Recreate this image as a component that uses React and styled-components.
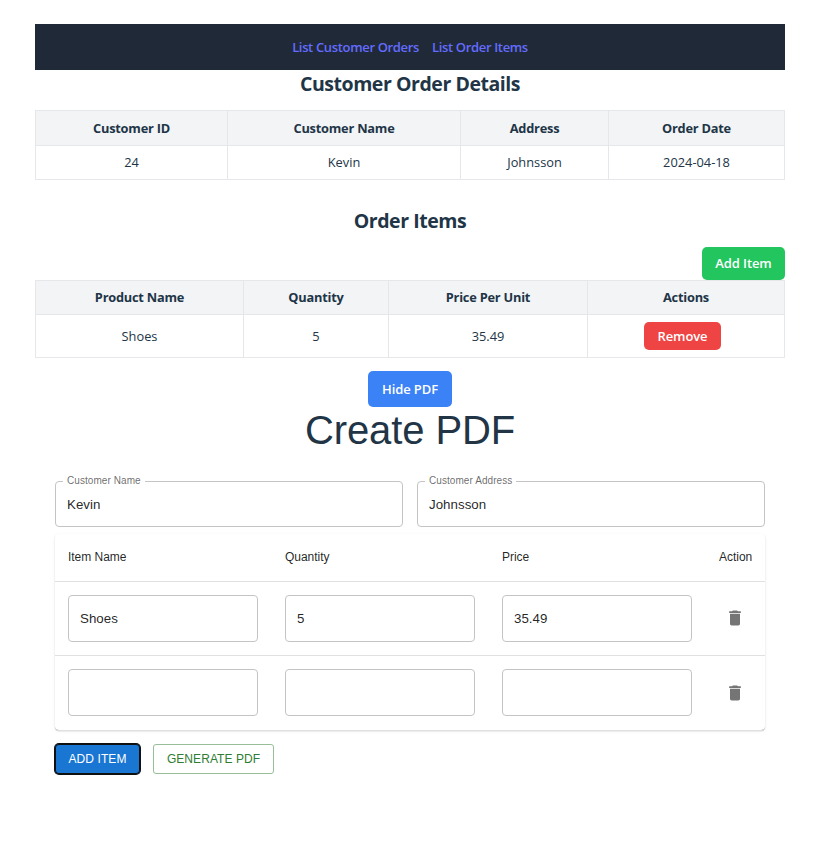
import React from "react";
import styled, { createGlobalStyle, css } from "styled-components";

const GlobalStyle = createGlobalStyle`
  *, *::before, *::after { box-sizing: border-box; }
  body {
    margin: 0;
    background: #fff;
    color: #213547;
    font-family: "Open Sans", "Noto Sans", sans-serif;
    font-size: 13px;
  }
  button, input { font: inherit; }
`;

const Page = styled.main`
  display: flex;
  flex-direction: column;
  width: 750px;
  margin: 0 0 0 35px;
  padding: 24px 0;
`;

const NavBar = styled.nav`
  display: flex;
  justify-content: center;
  align-items: center;
  gap: 13px;
  height: 46px;
  background: #1f2937;
`;

const NavLink = styled.a`
  color: #646cff;
  font-weight: 600;
  font-size: 13px;
  letter-spacing: -0.34px;
  line-height: 20px;
  text-decoration: none;
  white-space: nowrap;
`;

const SectionTitle = styled.h2`
  margin: ${(p) => p.$margin};
  font-size: 19.5px;
  font-weight: 700;
  letter-spacing: -0.45px;
  line-height: 28px;
  text-align: center;
`;

const DataTable = styled.table`
  width: 750px;
  table-layout: fixed;
  border-spacing: 0;
  border: solid #e5e7eb;
  border-width: 1px 0 0 1px;
`;

const Column = styled.col`
  width: ${(p) => p.$width}px;
`;

const cell = css`
  padding: 0;
  border: solid #e5e7eb;
  border-width: 0 1px 1px 0;
  text-align: center;
  vertical-align: middle;
  line-height: 20px;
`;

const HeadCell = styled.th`
  ${cell}
  height: ${(p) => p.$height}px;
  padding-bottom: ${(p) => (p.$height % 2 ? 0 : 1)}px;
  background: #f3f4f6;
  font-size: 12.8px;
  font-weight: 700;
  letter-spacing: -0.22px;
`;

const BodyCell = styled.td`
  ${cell}
  height: ${(p) => p.$height}px;
  padding-bottom: ${(p) => (p.$height % 2 ? 0 : 1)}px;
  font-size: 12.8px;
`;

const ActionRow = styled.div`
  display: flex;
  justify-content: ${(p) => p.$align};
  margin-top: ${(p) => p.$top}px;
`;

const SolidButton = styled.button`
  display: inline-flex;
  align-items: center;
  justify-content: center;
  vertical-align: middle;
  width: ${(p) => p.$width}px;
  height: ${(p) => p.$height}px;
  margin-right: ${(p) => p.$gutter || 0}px;
  padding: 0 0 ${(p) => (p.$height % 2 ? 1 : 0)}px;
  border: 0;
  border-radius: 5px;
  background: ${(p) => p.$color};
  color: #fff;
  font-weight: 600;
  font-size: 13px;
  letter-spacing: -0.1px;
  line-height: 20px;
`;

const PdfTitle = styled.h3`
  margin: 0;
  font: 400 40px/46px "Liberation Sans", Arial, sans-serif;
  letter-spacing: -0.1px;
  text-align: center;
`;

const PdfForm = styled.section`
  display: flex;
  flex-direction: column;
  width: 710px;
  margin: 23px 0 0 20px;
  color: rgba(0, 0, 0, 0.87);
  font-family: "Liberation Sans", Arial, sans-serif;
`;

const FieldRow = styled.div`
  display: grid;
  grid-template-columns: 348px 348px;
  gap: 14px;
`;

const Field = styled.fieldset`
  min-width: 0;
  height: 51px;
  margin: 0;
  padding: 0 7px;
  border: 1px solid #c4c4c4;
  border-radius: 4px;
`;

const FieldLabel = styled.legend`
  height: 11px;
  padding: 0 4px;
  color: rgba(0, 0, 0, 0.6);
  font-size: 10px;
  letter-spacing: 0.07px;
  line-height: 10px;
`;

const FieldInput = styled.input`
  display: block;
  width: 100%;
  height: 35px;
  padding: 0 4px;
  border: 0;
  outline: 0;
  background: transparent;
  color: inherit;
  font-size: 13.3px;
  letter-spacing: 0.03px;
`;

const Paper = styled.div`
  margin-top: 7px;
  height: 196px;
  border-radius: 4px;
  background: #fff;
  box-shadow: 0 1px 0 -0.5px rgba(0, 0, 0, 0.2), 0 2px 1px -1px rgba(0, 0, 0, 0.2),
    0 1px 1px rgba(0, 0, 0, 0.14), 0 1px 3px rgba(0, 0, 0, 0.1);
`;

const ItemRow = styled.div`
  display: grid;
  grid-template-columns: 190px 190px 190px 32px;
  column-gap: 27px;
  align-items: center;
  height: ${(p) => p.$height}px;
  padding: 0 13px ${(p) => p.$lift || 0}px;
  border-bottom: 1px solid #e0e0e0;
  font-size: 12px;

  &:last-child { border-radius: 0 0 4px 4px; }
`;

const ItemHeader = styled.span`
  line-height: 20px;
  letter-spacing: -0.03px;
  white-space: nowrap;
`;

const CellInput = styled.input`
  width: 190px;
  height: 47px;
  padding: 0 11px;
  border: 1px solid #c4c4c4;
  border-radius: 4px;
  outline: 0;
  background: transparent;
  color: inherit;
  font-size: 13.3px;
  letter-spacing: 0.03px;
`;

const IconButton = styled.button`
  display: flex;
  justify-content: center;
  padding: 0 1px ${(p) => p.$lift || 0}px 0;
  border: 0;
  background: transparent;
  color: #757575;
`;

const FormActions = styled.div`
  display: flex;
  gap: 13px;
  margin-top: 14px;
`;

const FormButton = styled.button`
  height: 30px;
  width: ${(p) => p.$width}px;
  padding: 0;
  border-radius: 3px;
  font-size: 12px;
  letter-spacing: ${(p) => p.$tracking};
  line-height: 20px;
  text-transform: uppercase;
  ${(p) =>
    p.$primary
      ? css`
          border: 0;
          border-radius: 4px;
          background: #1976d2;
          color: #fff;
          box-shadow: 0 0 0 1px #101010, inset 0 0 0 1px #101010;
        `
      : css`
          border: 1px solid #97be99;
          background: #fff;
          color: #2e7d32;
        `}
`;

function TrashIcon() {
  return (
    <svg width="20" height="20" viewBox="0 0 24 24" fill="currentColor" aria-hidden="true">
      <path d="M6 19c0 1.100.9 2 2 2h8c1.100 0 2-.9 2-2V7H6zM19 4h-3.500l-1-1h-5l-1 1H5v2h14z" />
    </svg>
  );
}

function Table({ columns, headHeight, rowHeight, cells }) {
  return (
    <DataTable>
      <colgroup>
        {columns.map(([name, width]) => (
          <Column key={name} $width={width} />
        ))}
      </colgroup>
      <thead>
        <tr>
          {columns.map(([name]) => (
            <HeadCell key={name} $height={headHeight}>{name}</HeadCell>
          ))}
        </tr>
      </thead>
      <tbody>
        <tr>
          {cells.map((value, i) => (
            <BodyCell key={columns[i][0]} $height={rowHeight}>{value}</BodyCell>
          ))}
        </tr>
      </tbody>
    </DataTable>
  );
}

const orderColumns = [["Customer ID", 192], ["Customer Name", 233], ["Address", 148], ["Order Date", 176]];
const itemColumns = [["Product Name", 208], ["Quantity", 145], ["Price Per Unit", 199], ["Actions", 197]];
const pdfItems = [
  { values: ["Shoes", "5", "35.49"], height: 74, lift: 0, iconLift: 2 },
  { values: ["", "", ""], height: 75, lift: 1, iconLift: 0 },
];

export default function App() {
  return (
    <>
      <GlobalStyle />
      <Page>
        <NavBar>
          <NavLink>List Customer Orders</NavLink>
          <NavLink>List Order Items</NavLink>
        </NavBar>
        <SectionTitle $margin="0 0 12px">Customer Order Details</SectionTitle>
        <Table
          columns={orderColumns}
          headHeight={35}
          rowHeight={34}
          cells={["24", "Kevin", "Johnsson", "2024-04-18"]}
        />
        <SectionTitle $margin="27px 0 0">Order Items</SectionTitle>
        <ActionRow $align="flex-end" $top={12}>
          <SolidButton $width={83} $height={33} $color="#22c55e">Add Item</SolidButton>
        </ActionRow>
        <Table
          columns={itemColumns}
          headHeight={34}
          rowHeight={43}
          cells={[
            "Shoes",
            "5",
            "35.49",
            <SolidButton $width={77} $height={28} $gutter={7} $color="#ef4444">Remove</SolidButton>,
          ]}
        />
        <ActionRow $align="center" $top={13}>
          <SolidButton $width={84} $height={36} $color="#3b82f6">Hide PDF</SolidButton>
        </ActionRow>
        <PdfTitle>Create PDF</PdfTitle>
        <PdfForm>
          <FieldRow>
            <Field>
              <FieldLabel>Customer Name</FieldLabel>
              <FieldInput defaultValue="Kevin" />
            </Field>
            <Field>
              <FieldLabel>Customer Address</FieldLabel>
              <FieldInput defaultValue="Johnsson" />
            </Field>
          </FieldRow>
          <Paper>
            <ItemRow $height={48} $lift={2}>
              {["Item Name", "Quantity", "Price", "Action"].map((name) => (
                <ItemHeader key={name}>{name}</ItemHeader>
              ))}
            </ItemRow>
            {pdfItems.map((item, row) => (
              <ItemRow key={row} $height={item.height} $lift={item.lift}>
                {item.values.map((value, i) => (
                  <CellInput key={i} defaultValue={value} />
                ))}
                <IconButton aria-label="Delete item" $lift={item.iconLift}>
                  <TrashIcon />
                </IconButton>
              </ItemRow>
            ))}
          </Paper>
          <FormActions>
            <FormButton $primary $width={85} $tracking="0.1px">Add Item</FormButton>
            <FormButton $width={121} $tracking="0.06px">Generate PDF</FormButton>
          </FormActions>
        </PdfForm>
      </Page>
    </>
  );
}
